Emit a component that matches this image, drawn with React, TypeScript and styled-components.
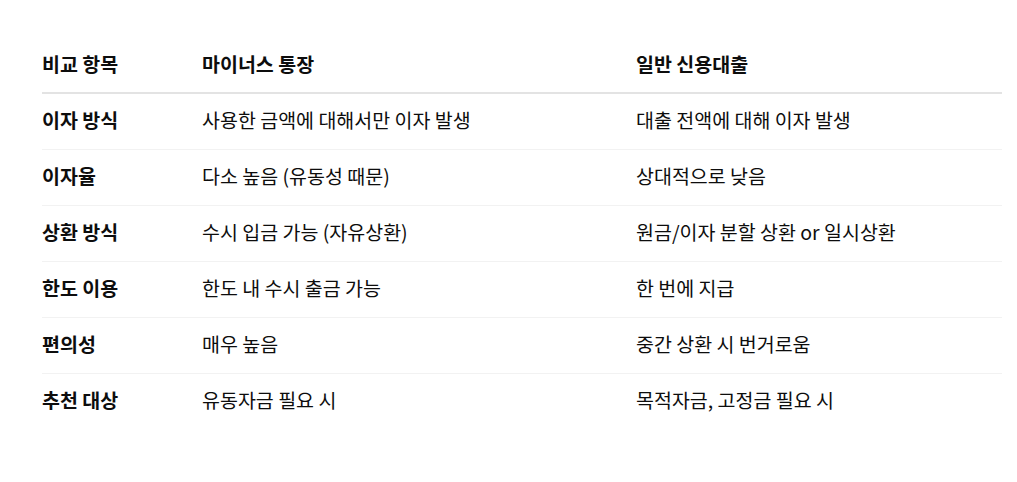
import React from 'react';
import styled, { createGlobalStyle } from 'styled-components';

const GlobalStyle = createGlobalStyle`
  html, body {
    margin: 0;
    padding: 0;
    background: #ffffff;
  }
  body {
    font-family: "Noto Sans CJK KR", "Noto Sans", "Liberation Sans", sans-serif;
    color: #0d0d0d;
  }
`;

interface Row {
  label: string;
  minus: string;
  credit: string;
}

const rows: Row[] = [
  { label: '이자 방식', minus: '사용한 금액에 대해서만 이자 발생', credit: '대출 전액에 대해 이자 발생' },
  { label: '이자율', minus: '다소 높음 (유동성 때문)', credit: '상대적으로 낮음' },
  { label: '상환 방식', minus: '수시 입금 가능 (자유상환)', credit: '원금/이자 분할 상환 or 일시상환' },
  { label: '한도 이용', minus: '한도 내 수시 출금 가능', credit: '한 번에 지급' },
  { label: '편의성', minus: '매우 높음', credit: '중간 상환 시 번거로움' },
  { label: '추천 대상', minus: '유동자금 필요 시', credit: '목적자금, 고정금 필요 시' },
];

const Page = styled.div`
  padding: 36px 15px 0 42px;
`;

const Table = styled.table`
  width: 960px;
  border-collapse: collapse;
  table-layout: fixed;
  font-size: 19.5px;
  line-height: 26px;
`;

const HeadCell = styled.th<{ width: number }>`
  width: ${({ width }) => width}px;
  padding: 15px 0 15px;
  text-align: left;
  vertical-align: top;
  font-weight: 700;
  border-bottom: 2px solid #e3e3e3;
`;

const BodyRow = styled.tr`
  border-bottom: 1px solid #f2f2f2;

  &:last-child {
    border-bottom: none;
  }
`;

const Cell = styled.td<{ bold?: boolean }>`
  padding: 13px 0 16px;
  vertical-align: top;
  font-weight: ${({ bold }) => (bold ? 700 : 400)};
`;

const App = () => {
  return (
    <>
      <GlobalStyle />
      <Page>
        <Table>
          <thead>
            <tr>
              <HeadCell width={160}>비교 항목</HeadCell>
              <HeadCell width={434}>마이너스 통장</HeadCell>
              <HeadCell width={366}>일반 신용대출</HeadCell>
            </tr>
          </thead>
          <tbody>
            {rows.map((row) => (
              <BodyRow key={row.label}>
                <Cell bold>{row.label}</Cell>
                <Cell>{row.minus}</Cell>
                <Cell>{row.credit}</Cell>
              </BodyRow>
            ))}
          </tbody>
        </Table>
      </Page>
    </>
  );
};

export default App;
